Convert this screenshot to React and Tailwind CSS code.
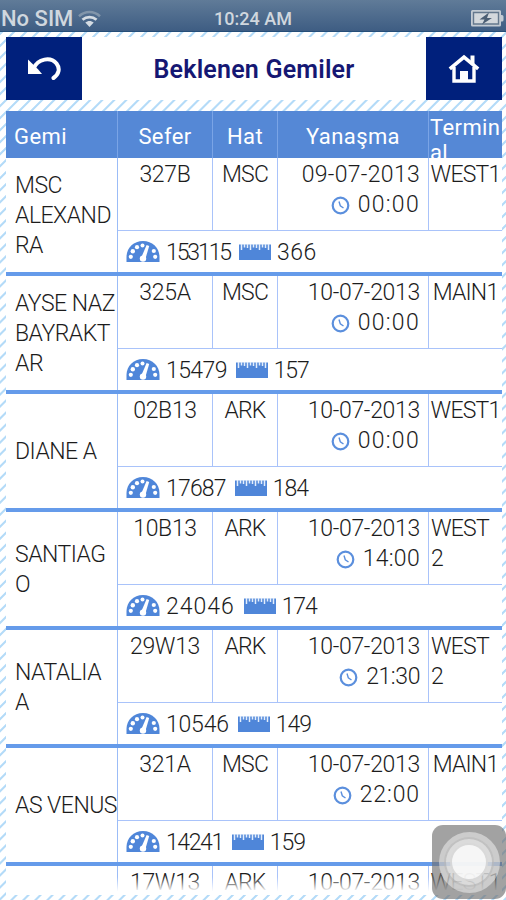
import clsx from "clsx";

const ships = [
  { name: ["MSC", "ALEXAND", "RA"], voyage: "327B", line: "MSC", date: "09-07-2013", time: "00:00", terminal: ["WEST1"], tonnage: "153115", length: "366", dateFit: "tracking-[0.3px]", timeFit: "tracking-[1.3px]", tonnageFit: "tracking-[-2.1px]", lengthFit: "tracking-[0.5px]" },
  { name: ["AYSE NAZ", "BAYRAKT", "AR"], voyage: "325A", line: "MSC", date: "10-07-2013", time: "00:00", terminal: ["MAIN1"], tonnage: "15479", length: "157", timeFit: "tracking-[1.3px]", tonnageFit: "tracking-[-0.6px]", lengthFit: "tracking-[-1.2px]" },
  { name: ["DIANE A"], voyage: "02B13", line: "ARK", date: "10-07-2013", time: "00:00", terminal: ["WEST1"], tonnage: "17687", length: "184", timeFit: "tracking-[1.3px]", tonnageFit: "tracking-[-0.8px]", lengthFit: "tracking-[-1px]" },
  { name: ["SANTIAG", "O"], voyage: "10B13", line: "ARK", date: "10-07-2013", time: "14:00", terminal: ["WEST", "2"], tonnage: "24046", length: "174", timeFit: "tracking-[0.3px]", tonnageFit: "tracking-[1px]", lengthFit: "tracking-[-1.2px]" },
  { name: ["NATALIA", "A"], voyage: "29W13", line: "ARK", date: "10-07-2013", time: "21:30", terminal: ["WEST", "2"], tonnage: "10546", length: "149", timeFit: "tracking-[-0.4px]", tonnageFit: "tracking-[-0.2px]", lengthFit: "tracking-[-1px]" },
  { name: ["AS VENUS"], voyage: "321A", line: "MSC", date: "10-07-2013", time: "22:00", terminal: ["MAIN1"], tonnage: "14241", length: "159", timeFit: "tracking-[0.9px]", tonnageFit: "tracking-[-1.4px]", lengthFit: "tracking-[-1px]" },
  { name: [], voyage: "17W13", line: "ARK", date: "10-07-2013", time: "", terminal: ["WEST1"], tonnage: "", length: "" },
];

function WifiIcon() {
  return (
    <svg className="ml-[5px] h-[18px] w-[23px]" viewBox="0 0 23 18" fill="none">
      <path d="M1 6.2C7 .6 16 .6 22 6.2" stroke="#8195aa" strokeWidth="2.6" />
      <path d="M4.5 9.8c4-3.6 10-3.6 14 0" stroke="#d5dce3" strokeWidth="2.8" />
      <path d="M7.3 12.6c2.4-2.2 6-2.2 8.4 0L11.5 17z" fill="#d5dce3" />
    </svg>
  );
}

function BatteryIcon() {
  return (
    <svg className="h-[19px] w-[34px]" viewBox="0 0 34 19">
      <path d="M2.5 1h27Q31 1 31 2.500V6h1q1.500 0 1.500 1.500V11q0 1.500-1.500 1.500h-1V16q0 1.500-1.500 1.500h-27Q1 17.500 1 16V2.500Q1 1 2.500 1z" fill="#c3cbd3" />
      <path d="M3.500 3.500h25v11.500h-25z" fill="#d3d8dc" stroke="#64788d" strokeWidth="1.400" />
      <path d="M19 3.500 9.500 10.500h5L12 15.500l10-6.500h-5z" fill="#4c5f74" />
    </svg>
  );
}

function BackIcon() {
  return (
    <svg className="h-[24px] w-[36px]" viewBox="0 0 36 24">
      <path d="M2 2.500V17h14l-4-4.800Z" fill="#fff" />
      <path d="M7.500 11.500C12 1.500 24.500-.5 30.500 6.500c3.800 5 2.600 10.500-3 14.500" fill="none" stroke="#fff" strokeWidth="4" strokeLinecap="round" />
    </svg>
  );
}

function HomeIcon() {
  return (
    <svg className="h-[30px] w-[32px]" viewBox="0 0 32 30" fill="none" stroke="#fff">
      <path d="M1.800 14.800 16 3l14.200 11.800" strokeWidth="3.600" />
      <path d="M24.500 1.500v9" strokeWidth="4" />
      <path d="M6 13v14h20V13" strokeWidth="3.400" />
      <path d="M12 17h8v11h-8z" fill="#fff" stroke="none" />
    </svg>
  );
}

function GaugeIcon() {
  return (
    <svg className="h-[23px] w-[34px] shrink-0" viewBox="0 0 34 23">
      <path d="M.5 22v-5C.5 8 7.500 1 17 1s16.500 7 16.500 16v5z" fill="#4f86d9" />
      <g fill="#fff">
        <circle cx="4.800" cy="16.800" r="2.100" />
        <circle cx="6.800" cy="11.200" r="2.200" />
        <circle cx="11" cy="7.200" r="2.100" />
        <circle cx="16.500" cy="5.600" r="2" />
        <circle cx="27.800" cy="11" r="2.100" />
        <circle cx="29.200" cy="16.800" r="2.100" />
        <path d="m20.600 5 2.600 1L19.500 18.500 15.500 17z" />
        <circle cx="17" cy="18.600" r="3.200" />
      </g>
    </svg>
  );
}

function RulerIcon() {
  return (
    <svg className="h-[16px] w-[32px] shrink-0" viewBox="0 0 32 16">
      <path d="M0 .5h32V16H0z" fill="#4f86d9" />
      <path d="M2.500 0v6M5.500 0v3.500M8.500 0v4M11.500 0v6M14.500 0v3.500M17.500 0v4M20.500 0v6M23.500 0v3.500M26.500 0v4M29.500 0v6" stroke="#e4eefc" strokeWidth="1.500" />
    </svg>
  );
}

function ClockIcon() {
  return (
    <svg className="h-[19px] w-[19px]" viewBox="0 0 19 19" fill="none" stroke="#5b8fdd">
      <circle cx="9.500" cy="9.500" r="7.800" strokeWidth="2.200" />
      <path d="m8 5.500 1.300 4.300 3.200 2.200" strokeWidth="1.400" />
    </svg>
  );
}

function ShipRow({ ship }) {
  return (
    <div className="flex h-[118px] shrink-0 border-b-4 border-[#659bea]">
      <div className="flex w-[112px] shrink-0 flex-col justify-center border-r border-[#9bbcf7] pl-[9px] pt-[2px] leading-[30px] tracking-[-0.5px]">
        {ship.name.map((part) => (
          <div key={part} className="whitespace-nowrap">{part}</div>
        ))}
      </div>
      <div className="flex w-[384px] shrink-0 flex-col">
        <div className="flex h-[73px] border-b border-[#a9c3fa] pt-0 leading-[30px]">
          <div className="w-[95px] border-r border-[#a9c3fa] pt-[2px] text-center tracking-[-0.3px]">{ship.voyage}</div>
          <div className="w-[65px] border-r border-[#a9c3fa] pt-[2px] text-center tracking-[-0.8px]">{ship.line}</div>
          <div className="w-[151px] border-r border-[#a9c3fa] pr-[8px] pt-[2px] text-right">
            <div className={ship.dateFit ?? "tracking-[-0.3px]"}>{ship.date}</div>
            {ship.time && (
              <div className="flex items-center justify-end gap-[8px]">
                <ClockIcon />
                <span className={ship.timeFit}>{ship.time}</span>
              </div>
            )}
          </div>
          <div className={clsx("w-[73px] pt-[2px] tracking-[-0.8px]", ship.terminal.length > 1 ? "pl-[2px]" : "text-center")}>
            {ship.terminal.map((part) => (
              <div key={part} className="whitespace-nowrap">{part}</div>
            ))}
          </div>
        </div>
        {ship.tonnage && (
          <div className="flex h-[41px] items-center pl-[8px]">
            <GaugeIcon />
            <span className={clsx("ml-[6px] pt-[3px]", ship.tonnageFit)}>{ship.tonnage}</span>
            <span className="ml-[9px]"><RulerIcon /></span>
            <span className={clsx("ml-[6px] pt-[3px]", ship.lengthFit)}>{ship.length}</span>
          </div>
        )}
      </div>
    </div>
  );
}

function AssistiveTouch() {
  return (
    <div className="absolute bottom-[1px] right-0 flex h-[74px] w-[74px] items-center justify-center rounded-[11px] bg-[#707070]/65">
      <div className="flex h-[61px] w-[61px] items-center justify-center rounded-full bg-white/45">
        <div className="flex h-[50px] w-[50px] items-center justify-center rounded-full border-2 border-[#999]/40 bg-white/30">
          <div className="h-[38px] w-[38px] rounded-full border-2 border-[#bbb]/50 bg-white/75" />
        </div>
      </div>
    </div>
  );
}

export default function App() {
  return (
    <div className="relative flex h-[900px] w-[506px] flex-col overflow-hidden bg-white bg-[repeating-linear-gradient(135deg,transparent_0px,transparent_5.5px,#b4dbf8_6.4px,#b4dbf8_7.6px,transparent_8.5px)] font-['Roboto',sans-serif]">
      <header className="grid h-[32px] shrink-0 grid-cols-3 items-center border-b border-[#254e79] bg-linear-to-b from-[#607b98] to-[#3e5d83] pt-[2px] text-[18px] font-medium text-[#d0d7de]">
        <div className="flex items-center pl-[1px] text-[22px]">
          No SIM
          <WifiIcon />
        </div>
        <div className="text-center">10:24 AM</div>
        <div className="flex justify-end pr-[2px]"><BatteryIcon /></div>
      </header>

      <nav className="ml-[6px] mt-[5px] flex h-[63px] w-[496px] shrink-0 items-center bg-white">
        <button className="flex h-[63px] w-[76px] items-center justify-center bg-[#00207c]">
          <BackIcon />
        </button>
        <h1 className="flex-1 pt-[2px] text-center text-[25px] font-semibold tracking-[0.2px] text-[#151773]">Beklenen Gemiler</h1>
        <button className="flex h-[63px] w-[76px] items-center justify-center bg-[#00207c]">
          <HomeIcon />
        </button>
      </nav>

      <main className="relative ml-[6px] mt-[11px] flex h-[784px] w-[496px] shrink-0 flex-col overflow-hidden bg-white">
        <div className="flex h-[47px] shrink-0 items-center overflow-hidden bg-[#5588d6] text-[22px] tracking-[0.4px] text-white">
          <div className="flex h-full w-[112px] shrink-0 items-center border-r border-[#7aa4e6] pl-[8px] pt-[3px]">Gemi</div>
          <div className="flex h-full w-[95px] shrink-0 items-center justify-center border-r border-[#7aa4e6] pt-[3px]">Sefer</div>
          <div className="flex h-full w-[65px] shrink-0 items-center justify-center border-r border-[#7aa4e6] pt-[3px]">Hat</div>
          <div className="flex h-full w-[151px] shrink-0 items-center justify-center border-r border-[#7aa4e6] pt-[3px]">Yanaşma</div>
          <div className="h-full w-[73px] shrink-0 overflow-hidden pl-[1px] pt-[4px] leading-[25px]">
            <div>Termin</div>
            <div>al</div>
          </div>
        </div>
        <div className="flex flex-col text-[23px] font-light text-[#1c1c1c]">
          {ships.map((ship) => (
            <ShipRow key={ship.voyage} ship={ship} />
          ))}
        </div>
        <div className="absolute inset-x-0 bottom-0 h-[18px] bg-linear-to-t from-white from-20% to-transparent" />
      </main>

      <AssistiveTouch />
    </div>
  );
}
